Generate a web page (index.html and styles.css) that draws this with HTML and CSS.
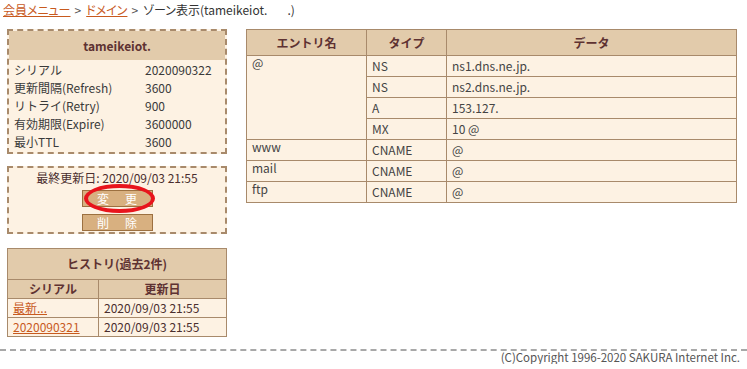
FILE: index.html
```html
<!DOCTYPE html>
<html lang="ja">
<head>
<meta charset="utf-8">
<title>ゾーン表示</title>
<link rel="stylesheet" href="styles.css">
</head>
<body>
<div class="crumb"><a href="#">会員メニュー</a><span class="sep">&gt;</span><a href="#">ドメイン</a><span class="sep">&gt;</span>ゾーン表示(tameikeiot.<span class="gap"></span>.)</div>
<div class="main">
  <div class="side">
    <div class="box soa">
      <div class="box-head">tameikeiot.</div>
      <table class="soa-table">
        <tr><td>シリアル</td><td>2020090322</td></tr>
        <tr><td>更新間隔(Refresh)</td><td>3600</td></tr>
        <tr><td>リトライ(Retry)</td><td>900</td></tr>
        <tr><td>有効期限(Expire)</td><td>3600000</td></tr>
        <tr><td>最小TTL</td><td>3600</td></tr>
      </table>
    </div>
    <div class="box actions">
      <div class="updated">最終更新日: 2020/09/03 21:55</div>
      <div class="btn-wrap">
        <button class="btn">変　更</button>
        <span class="circle"></span>
      </div>
      <button class="btn">削　除</button>
    </div>
    <table class="grid history">
      <tr><th colspan="2" class="hist-title">ヒストリ(過去2件)</th></tr>
      <tr><th>シリアル</th><th>更新日</th></tr>
      <tr><td><a href="#">最新...</a></td><td>2020/09/03 21:55</td></tr>
      <tr><td><a href="#">2020090321</a></td><td>2020/09/03 21:55</td></tr>
    </table>
  </div>
  <table class="grid zone">
    <tr><th class="c1">エントリ名</th><th class="c2">タイプ</th><th>データ</th></tr>
    <tr><td rowspan="4" class="name">@</td><td>NS</td><td>ns1.dns.ne.jp.</td></tr>
    <tr><td>NS</td><td>ns2.dns.ne.jp.</td></tr>
    <tr><td>A</td><td>153.127.</td></tr>
    <tr><td>MX</td><td>10 @</td></tr>
    <tr><td class="name">www</td><td>CNAME</td><td>@</td></tr>
    <tr><td class="name">mail</td><td>CNAME</td><td>@</td></tr>
    <tr><td class="name">ftp</td><td>CNAME</td><td>@</td></tr>
  </table>
</div>
<div class="footer">(C)Copyright 1996-2020 SAKURA Internet Inc.</div>
</body>
</html>
```

FILE: styles.css
```css
body {
  margin: 0;
  font-family: "Noto Sans CJK JP", sans-serif;
  font-size: 12px;
  line-height: 16px;
  color: #3a3a3a;
  background: #fff;
}
a { color: #c85a1e; }
.crumb {
  padding: 2px 3px;
  height: 25px;
  color: #333;
  font-feature-settings: "palt";
}
.crumb .sep { color: #555; margin: 0 5px 0 4px; }
.crumb .gap { display: inline-block; width: 20px; }
.main {
  display: flex;
  align-items: flex-start;
  padding-left: 7px;
}
.side {
  width: 220px;
  display: flex;
  flex-direction: column;
}
.box {
  border: 2px dashed #a88a6b;
  background: #fdf2e3;
}
.box-head {
  background: #e2cbab;
  height: 29px;
  line-height: 29px;
  text-align: center;
  font-weight: bold;
  color: #5e3232;
}
.soa-table {
  border-collapse: collapse;
  margin: 1px 0 1px 5px;
}
.soa-table td {
  padding: 0;
  height: 18px;
  line-height: 18px;
}
.soa-table td:first-child { width: 131px; }
.actions {
  margin-top: 12px;
  height: 62px;
  display: flex;
  flex-direction: column;
  align-items: center;
  padding-top: 2px;
}
.updated { color: #4a2e2e; height: 17px; line-height: 16px; }
.btn-wrap { position: relative; margin-top: 3px; }
.btn {
  display: block;
  width: 71px;
  height: 17px;
  padding: 0 0 0 2px;
  background: #d8b080;
  border: 1px solid #9c7040;
  color: #fff;
  font-family: "Noto Sans CJK JP", sans-serif;
  font-size: 12px;
  line-height: 15px;
  letter-spacing: 2px;
}
.actions > .btn { margin-top: 7px; }
.circle {
  position: absolute;
  left: 2px;
  top: -6px;
  width: 63px;
  height: 21px;
  border: 4px solid #e8141c;
  border-radius: 50%;
}
.grid {
  border-collapse: collapse;
  background: #fdf2e3;
}
.grid th, .grid td {
  border: 1px solid #a88a6b;
  padding: 0 5px;
}
.grid th {
  background: #e2cbab;
  color: #5e3232;
  font-weight: bold;
}
.history {
  margin-top: 14px;
  width: 220px;
}
.history .hist-title { height: 30px; }
.history th { height: 18px; }
.history td { height: 18px; color: #4a2e2e; }
.history td:first-child { width: 80px; }
.zone {
  margin-left: 19px;
  width: 491px;
}
.zone th { height: 25px; }
.zone .c1 { width: 109px; }
.zone .c2 { width: 69px; }
.zone td { height: 20px; color: #444; }
.zone td.name { vertical-align: top; line-height: 14px; }
.footer {
  margin-top: 12px;
  border-top: 2px dashed #a8a8a8;
  text-align: right;
  padding: 0 7px 0 0;
  font-size: 11.5px;
  line-height: 13px;
  color: #555;
}
```
